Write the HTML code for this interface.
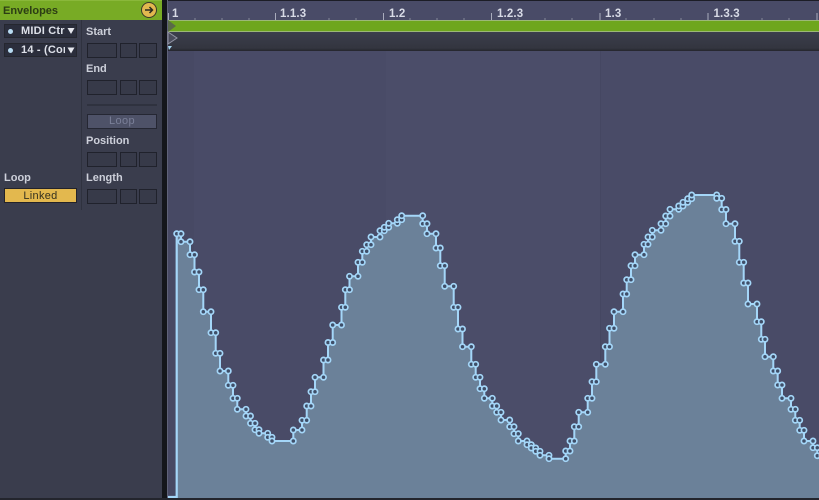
<!DOCTYPE html>
<html><head><meta charset="utf-8"><style>
html,body{margin:0;padding:0;background:#101216}
#r{position:relative;width:819px;height:500px;overflow:hidden;background:#14161b;font-family:"Liberation Sans",sans-serif;filter:blur(.35px)}
#r div{position:absolute;box-sizing:border-box}
.t{font-size:11px;font-weight:bold;color:#cdd0da;line-height:12px;white-space:nowrap}
.b{height:15px;background:#373a49;border:1px solid #20222c}
.rt{font-size:11.5px;font-weight:bold;color:#d8dbe6;line-height:12px;top:8px;letter-spacing:.15px}
.d{height:14px;width:73px;left:4px;background:#2b2e3c;border:1px solid #25272f}
.dt{left:21px;width:44px;height:12px;overflow:hidden;color:#dde0e8;font-size:11px;font-weight:bold;line-height:12px;white-space:nowrap;letter-spacing:.2px}
</style></head><body><div id="r">
<div style="left:0;top:0;width:162px;height:500px;background:#3a3d4d"></div>
<div style="left:0;top:0;width:162px;height:20px;background:#78ab25;border-top:1px solid #8ab83a"></div>
<div class="t" style="left:3px;top:5px;color:#2c3d14;font-size:11px">Envelopes</div>
<div style="left:141px;top:2px;width:16px;height:16px;border-radius:50%;background:#e2b84e;border:1px solid #3a3a28"></div>
<svg style="position:absolute;left:141px;top:2px" width="16" height="16"><path d="M4 8H11M8.5 5L11.5 8L8.5 11" stroke="#2a2a20" stroke-width="1.5" fill="none"/></svg>

<div class="d" style="top:24px"></div>
<div class="d" style="top:43px"></div>
<div class="dt" style="top:25px">MIDI Ctr</div>
<div class="dt" style="top:44px">14 - (Cor</div>
<div style="left:8px;top:29px;width:5px;height:5px;border-radius:50%;background:#b8dcf2"></div>
<div style="left:8px;top:48px;width:5px;height:5px;border-radius:50%;background:#b8dcf2"></div>
<svg style="position:absolute;left:64px;top:24px" width="14" height="34" fill="#e6e8ee"><path d="M3.5 4H10.5L7 10Z"/><path d="M3.5 23.5H10.5L7 29.5Z"/></svg>

<div style="left:81px;top:20px;width:1px;height:190px;background:#2f323f"></div>
<div class="t" style="left:86px;top:26px">Start</div>
<div class="b" style="left:87px;top:43px;width:30px"></div><div class="b" style="left:120px;top:43px;width:17px"></div><div class="b" style="left:139px;top:43px;width:18px"></div>
<div class="t" style="left:86px;top:63px">End</div>
<div class="b" style="left:87px;top:80px;width:30px"></div><div class="b" style="left:120px;top:80px;width:17px"></div><div class="b" style="left:139px;top:80px;width:18px"></div>
<div style="left:87px;top:104px;width:70px;height:2px;background:#2f323f"></div>
<div style="left:87px;top:114px;width:70px;height:15px;background:#4e5268;border:1px solid #252733;color:#7a7f98;font-size:11px;font-weight:normal;text-align:center;line-height:13px;letter-spacing:.4px">Loop</div>
<div class="t" style="left:86px;top:135px">Position</div>
<div class="b" style="left:87px;top:152px;width:30px"></div><div class="b" style="left:120px;top:152px;width:17px"></div><div class="b" style="left:139px;top:152px;width:18px"></div>
<div class="t" style="left:4px;top:172px">Loop</div>
<div class="t" style="left:86px;top:172px">Length</div>
<div style="left:4px;top:188px;width:73px;height:15px;background:#e3b84e;border:1px solid #23232a;color:#33301f;font-size:11px;text-align:center;line-height:15px;letter-spacing:.3px">Linked</div>
<div class="b" style="left:87px;top:189px;width:30px"></div><div class="b" style="left:120px;top:189px;width:17px"></div><div class="b" style="left:139px;top:189px;width:18px"></div>

<div style="left:167px;top:0;width:652px;height:500px;background:#494b67"></div>
<div style="left:167px;top:0;width:652px;height:1px;background:#1c1d26"></div>
<div style="left:168px;top:51px;width:651px;height:449px;background:#494b67"></div>
<div style="left:386px;top:51px;width:214px;height:449px;background:#4b4d69"></div>
<div style="left:168px;top:51px;width:26px;height:449px;background:#474964"></div>
<div style="left:600px;top:51px;width:1px;height:449px;background:#454762"></div>
<div style="left:167px;top:0;width:1px;height:500px;background:#5f6278"></div>

<div class="rt" style="left:172px">1</div>
<div class="rt" style="left:280px">1.1.3</div>
<div class="rt" style="left:389px">1.2</div>
<div class="rt" style="left:497px">1.2.3</div>
<div class="rt" style="left:605px">1.3</div>
<div class="rt" style="left:713.5px">1.3.3</div>
<svg style="position:absolute;left:0;top:0" width="819" height="20" fill="none" stroke="#a9acbc" stroke-width="1">
<path d="M275.5 13V20M383.5 13V20M491.5 13V20M600 13V20M708 13V20M817 13V20M168.5 13V20"/>
<path stroke="#858899" d="M195 18V20M222 18V20M249 18V20M302 18V20M329 18V20M356 18V20M410 18V20M437 18V20M464 18V20M518 18V20M545 18V20M572 18V20M626 18V20M654 18V20M681 18V20M735 18V20M762 18V20M789 18V20"/>
</svg>

<div style="left:168px;top:20px;width:651px;height:12px;background:#6ea61d;border-top:1px solid #9cb877;border-bottom:1px solid #9cb877"></div>
<div style="left:168px;top:32px;width:651px;height:19px;background:linear-gradient(#3b3e4c,#33353f 85%,#24252d)"></div>
<svg style="position:absolute;left:167px;top:19px" width="14" height="34"><path d="M1 1L9 7L1 13Z" fill="#5a6a48"/><path d="M1 13L10 19L1 25Z" fill="#4a4c5c" stroke="#9496a6"/><path d="M1 27H5L2 31Z" fill="#a8d8f4"/></svg>

<svg style="position:absolute;left:0;top:0" width="819" height="500">
<defs><marker id="m" markerUnits="userSpaceOnUse" markerWidth="10" markerHeight="10" refX="5" refY="5"><circle cx="5" cy="5" r="2.6" fill="#3f4e68" stroke="#a4d6f8" stroke-width="1.7"/></marker></defs>
<polygon fill="#6b8199" points="176.7,497 176.7,233.7 181,233.7 181,241.7 190,241.7 190,254.7 194.5,254.7 194.5,272 199,272 199,289.7 203.3,289.7 203.3,311.7 211,311.7 211,332.7 215.7,332.7 215.7,353.3 220,353.3 220,371 228.3,371 228.3,385.3 233,385.3 233,398.3 237.3,398.3 237.3,409.3 246,409.3 246,416 250.5,416 250.5,423.3 255,423.3 255,429.7 259,429.7 259,433.3 267.7,433.3 267.7,437.3 272,437.3 272,441 293.3,441 293.3,430 302,430 302,420.3 306.7,420.3 306.7,406 311,406 311,391.7 315,391.7 315,377.3 323.5,377.3 323.5,360 328,360 328,342.5 332.7,342.5 332.7,325 341.5,325 341.5,307.3 345.3,307.3 345.3,289.7 349.5,289.7 349.5,276.3 358,276.3 358,262.3 362.3,262.3 362.3,251.3 366.7,251.3 366.7,244.7 371,244.7 371,237 380,237 380,230.7 384.3,230.7 384.3,227.3 388.7,227.3 388.7,223.3 397.3,223.3 397.3,219.7 401.7,219.7 401.7,215.7 422.7,215.7 422.7,223.7 427,223.7 427,233.7 436,233.7 436,248 440.3,248 440.3,265.7 444.7,265.7 444.7,286.3 453.7,286.3 453.7,307.3 458,307.3 458,329 462.5,329 462.5,346.7 471.3,346.7 471.3,364.3 475.7,364.3 475.7,377.3 480,377.3 480,388.7 484.3,388.7 484.3,398.3 492.3,398.3 492.3,406 496.7,406 496.7,412.3 501,412.3 501,420 509.7,420 509.7,426.7 514,426.7 514,433.7 518.3,433.7 518.3,441 527,441 527,444.7 531.3,444.7 531.3,448 535.7,448 535.7,451.3 540,451.3 540,455.3 549,455.3 549,458.7 565.7,458.7 565.7,451 570,451 570,441 574.3,441 574.3,426.7 578.7,426.7 578.7,412.3 587.7,412.3 587.7,398.3 592,398.3 592,381.7 596.3,381.7 596.3,364.3 605.3,364.3 605.3,346.7 609.5,346.7 609.5,328.3 614,328.3 614,311.7 623,311.7 623,294 626.7,294 626.7,279.7 631,279.7 631,265.7 635,265.7 635,254.7 644,254.7 644,244.3 648,244.3 648,237 652.3,237 652.3,230.3 661,230.3 661,223.7 665.7,223.7 665.7,216 670,216 670,209.3 678.7,209.3 678.7,206 683,206 683,202.3 687.7,202.3 687.7,198.7 691.7,198.7 691.7,195 716.7,195 716.7,198.3 721.7,198.3 721.7,209.5 726,209.5 726,223.7 735,223.7 735,241.3 739.3,241.3 739.3,262.3 743.7,262.3 743.7,283 748,283 748,304 757,304 757,321.7 761.3,321.7 761.3,339.3 765,339.3 765,356.7 773.3,356.7 773.3,371 777.7,371 777.7,385 782,385 782,398.3 791,398.3 791,409.3 795.3,409.3 795.3,420.3 799.7,420.3 799.7,430.3 804,430.3 804,441 813,441 813,447.7 817.3,447.7 817.3,455.7 822,455.7 822,500 176.7,500"/>
<path d="M168 497H176.7V233.7" fill="none" stroke="#a4d6f8" stroke-width="2.2"/>
<polyline fill="none" stroke="#a4d6f8" stroke-width="2" marker-start="url(#m)" marker-mid="url(#m)" marker-end="url(#m)" points="176.7,233.7 181,233.7 181,241.7 190,241.7 190,254.7 194.5,254.7 194.5,272 199,272 199,289.7 203.3,289.7 203.3,311.7 211,311.7 211,332.7 215.7,332.7 215.7,353.3 220,353.3 220,371 228.3,371 228.3,385.3 233,385.3 233,398.3 237.3,398.3 237.3,409.3 246,409.3 246,416 250.5,416 250.5,423.3 255,423.3 255,429.7 259,429.7 259,433.3 267.7,433.3 267.7,437.3 272,437.3 272,441 293.3,441 293.3,430 302,430 302,420.3 306.7,420.3 306.7,406 311,406 311,391.7 315,391.7 315,377.3 323.5,377.3 323.5,360 328,360 328,342.5 332.7,342.5 332.7,325 341.5,325 341.5,307.3 345.3,307.3 345.3,289.7 349.5,289.7 349.5,276.3 358,276.3 358,262.3 362.3,262.3 362.3,251.3 366.7,251.3 366.7,244.7 371,244.7 371,237 380,237 380,230.7 384.3,230.7 384.3,227.3 388.7,227.3 388.7,223.3 397.3,223.3 397.3,219.7 401.7,219.7 401.7,215.7 422.7,215.7 422.7,223.7 427,223.7 427,233.7 436,233.7 436,248 440.3,248 440.3,265.7 444.7,265.7 444.7,286.3 453.7,286.3 453.7,307.3 458,307.3 458,329 462.5,329 462.5,346.7 471.3,346.7 471.3,364.3 475.7,364.3 475.7,377.3 480,377.3 480,388.7 484.3,388.7 484.3,398.3 492.3,398.3 492.3,406 496.7,406 496.7,412.3 501,412.3 501,420 509.7,420 509.7,426.7 514,426.7 514,433.7 518.3,433.7 518.3,441 527,441 527,444.7 531.3,444.7 531.3,448 535.7,448 535.7,451.3 540,451.3 540,455.3 549,455.3 549,458.7 565.7,458.7 565.7,451 570,451 570,441 574.3,441 574.3,426.7 578.7,426.7 578.7,412.3 587.7,412.3 587.7,398.3 592,398.3 592,381.7 596.3,381.7 596.3,364.3 605.3,364.3 605.3,346.7 609.5,346.7 609.5,328.3 614,328.3 614,311.7 623,311.7 623,294 626.7,294 626.7,279.7 631,279.7 631,265.7 635,265.7 635,254.7 644,254.7 644,244.3 648,244.3 648,237 652.3,237 652.3,230.3 661,230.3 661,223.7 665.7,223.7 665.7,216 670,216 670,209.3 678.7,209.3 678.7,206 683,206 683,202.3 687.7,202.3 687.7,198.7 691.7,198.7 691.7,195 716.7,195 716.7,198.3 721.7,198.3 721.7,209.5 726,209.5 726,223.7 735,223.7 735,241.3 739.3,241.3 739.3,262.3 743.7,262.3 743.7,283 748,283 748,304 757,304 757,321.7 761.3,321.7 761.3,339.3 765,339.3 765,356.7 773.3,356.7 773.3,371 777.7,371 777.7,385 782,385 782,398.3 791,398.3 791,409.3 795.3,409.3 795.3,420.3 799.7,420.3 799.7,430.3 804,430.3 804,441 813,441 813,447.7 817.3,447.7 817.3,455.7 822,455.7"/>
</svg>
<div style="left:0;top:498px;width:819px;height:2px;background:#23252d"></div>
</div></body></html>
